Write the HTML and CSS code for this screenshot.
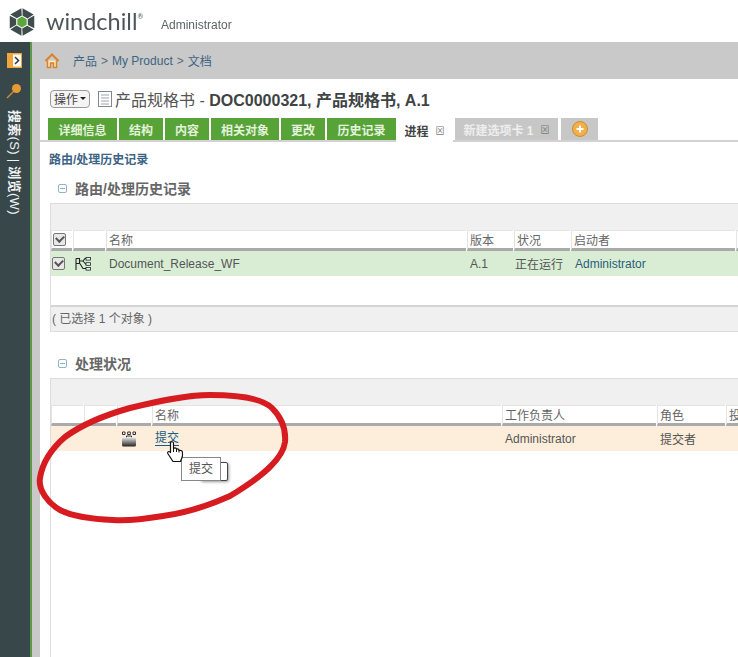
FILE: index.html
```html
<!DOCTYPE html>
<html lang="zh">
<head>
<meta charset="utf-8">
<title>Windchill</title>
<link rel="stylesheet" href="styles.css">
</head>
<body>
<div class="page">
  <header class="topbar">
    <svg class="logo" viewBox="-15 -15 30 30" width="28" height="30">
      <g fill="#3f4c4e">
        <path d="M0.600 -14.800 L12.400 -8 L6 -3.700 L0.600 -6.800 Z"/>
        <path transform="rotate(60)" d="M0.600 -14.800 L12.400 -8 L6 -3.700 L0.600 -6.800 Z"/>
        <path transform="rotate(120)" d="M0.600 -14.800 L12.400 -8 L6 -3.700 L0.600 -6.800 Z"/>
        <path transform="rotate(180)" d="M0.600 -14.800 L12.400 -8 L6 -3.700 L0.600 -6.800 Z"/>
        <path transform="rotate(240)" d="M0.600 -14.800 L12.400 -8 L6 -3.700 L0.600 -6.800 Z"/>
        <path transform="rotate(300)" d="M0.600 -14.800 L12.400 -8 L6 -3.700 L0.600 -6.800 Z"/>
      </g>
      <path d="M0 -5.800 L5 -2.900 L5 2.900 L0 5.800 L-5 2.900 L-5 -2.900 Z" fill="#5aa83c"/>
    </svg>
    <span class="brand">windchill<sup class="reg">®</sup></span>
    <span class="user">Administrator</span>
  </header>
  <div class="body-row">
    <aside class="sidebar">
      <svg class="side-open" viewBox="0 0 15 15" width="15" height="15">
        <rect width="15" height="15" fill="#f0a63c"/>
        <rect x="6" y="1.500" width="8" height="12" fill="#fff"/>
        <path d="M8 4 L11.500 7.500 L8 11" fill="none" stroke="#33393a" stroke-width="1.500"/>
      </svg>
      <svg class="side-pin" viewBox="0 0 16 16" width="16" height="16">
        <path d="M1 15 L8 8" stroke="#c98b3a" stroke-width="1.500"/>
        <circle cx="10.500" cy="5.500" r="4.500" fill="#e79a33"/>
      </svg>
      <div class="side-text"><b>搜索</b>(S) | <b>浏览</b>(W)</div>
    </aside>
    <main class="content">
      <nav class="crumbs">
        <svg class="home" viewBox="0 0 16 16" width="16" height="16">
          <path d="M1.500 8 L8 1.500 L14.500 8" fill="none" stroke="#d9822b" stroke-width="2"/>
          <path d="M3.500 7.500 V14.500 H6.500 V10 H9.500 V14.500 H12.500 V7.500" fill="#fde9b8" stroke="#d9822b" stroke-width="1.500"/>
        </svg>
        <a class="crumb">产品</a><span class="sep">&gt;</span><a class="crumb">My Product</a><span class="sep">&gt;</span><a class="crumb">文档</a>
      </nav>
      <section class="panel">
        <div class="title-row">
          <span class="action-btn">操作<i class="caret"></i></span>
          <svg class="doc" viewBox="0 0 14 16" width="14" height="16">
            <rect x="0.500" y="0.500" width="13" height="15" fill="#fff" stroke="#7d8a96"/>
            <path d="M3 4 H11 M3 7 H11 M3 10 H11 M3 13 H11" stroke="#9aa5ae"/>
          </svg>
          <h1 class="title">产品规格书 - <b>DOC0000321, 产品规格书, A.1</b></h1>
        </div>
        <div class="tabs">
          <span class="tab w69">详细信息</span>
          <span class="tab w44">结构</span>
          <span class="tab w44">内容</span>
          <span class="tab w68">相关对象</span>
          <span class="tab w44">更改</span>
          <span class="tab w69">历史记录</span>
          <span class="tab-active">进程<i class="x">⊠</i></span>
          <span class="tab-gray w103">新建选项卡 1<i class="x">⊠</i></span>
          <span class="tab-gray w37">
            <svg viewBox="0 0 16 16" width="16" height="16"><circle cx="8" cy="8" r="7.500" fill="#f2b04c" stroke="#d08a2c"/><path d="M4.500 8 H11.500 M8 4.500 V11.500" stroke="#fff" stroke-width="2"/></svg>
          </span>
        </div>
        <div class="sub-link">路由/处理历史记录</div>

        <h2 class="heading first"><i class="minus"></i>路由/处理历史记录</h2>
        <div class="table">
          <div class="toolbar"></div>
          <div class="row head cols-a">
            <span class="hc center"><i class="check"></i></span>
            <span class="hc"></span>
            <span class="hc">名称</span>
            <span class="hc">版本</span>
            <span class="hc">状况</span>
            <span class="hc">启动者</span>
            <span class="hc"></span>
          </div>
          <div class="row body green cols-a">
            <span class="center"><i class="check"></i></span>
            <span class="icon-cell">
              <svg viewBox="0 0 16 14" width="16" height="14">
                <path d="M1 1.500 V13 M1 1.500 H4.500 V6.500 H1 M4.500 4 H8 L10 1.500 H11 M8 4 L11 7.500 M4.500 6 L8 11.500 H11" fill="none" stroke="#222" stroke-width="1.100"/>
                <rect x="11" y="0.500" width="4.500" height="2.600" fill="#dfe" stroke="#222" stroke-width="0.800"/>
                <rect x="11" y="5.700" width="4.500" height="2.600" fill="#dfe" stroke="#222" stroke-width="0.800"/>
                <rect x="11" y="10.500" width="4.500" height="2.600" fill="#dfe" stroke="#222" stroke-width="0.800"/>
              </svg>
            </span>
            <span class="pad3">Document_Release_WF</span>
            <span class="pad3">A.1</span>
            <span class="pad1">正在运行</span>
            <a class="link pad4">Administrator</a>
            <span></span>
          </div>
          <div class="empty"></div>
          <div class="footer">( 已选择 1 个对象 )</div>
        </div>

        <h2 class="heading second"><i class="minus"></i>处理状况</h2>
        <div class="table last">
          <div class="toolbar"></div>
          <div class="row head cols-b">
            <span class="hc"></span>
            <span class="hc"></span>
            <span class="hc"></span>
            <span class="hc">名称</span>
            <span class="hc">工作负责人</span>
            <span class="hc">角色</span>
            <span class="hc">投</span>
          </div>
          <div class="row body peach cols-b">
            <span></span>
            <span></span>
            <span class="icon-cell task">
              <svg viewBox="0 0 16 16" width="16" height="16">
                <defs><linearGradient id="case" x1="0" y1="0" x2="0" y2="1"><stop offset="0" stop-color="#e4e4e4"/><stop offset="1" stop-color="#222"/></linearGradient></defs>
                <path d="M1.500 1 H4 V3.500 H1.500 Z M6.700 1 H9.300 V3.500 H6.700 Z M12 1 H14.500 V3.500 H12 Z" fill="#fff" stroke="#333"/>
                <path d="M5.500 6.500 V5 H10.500 V6.500" fill="none" stroke="#333"/>
                <rect x="1" y="6.500" width="14" height="9" rx="1.500" fill="url(#case)"/>
              </svg>
            </span>
            <span class="pad3"><a class="under">提交</a></span>
            <span class="pad3">Administrator</span>
            <span class="pad3">提交者</span>
            <span></span>
          </div>
        </div>
      </section>
    </main>
  </div>

  <div class="tip-back"></div>
  <div class="tip">提交</div>
  <svg class="hand" viewBox="0 0 16 21" width="16" height="21">
    <path d="M3.500 2 C3.500 0.300 6.500 0.300 6.500 2 V7.500 C7.500 6.500 9 6.500 9.500 8 C10.500 7.500 12 8 12 9.500 C13 9 15.500 9.500 15.500 11.500 V15 L13.500 20.500 H6 L0.800 12.500 C0 11 2 9.500 3.500 11.500 Z" fill="#fff" stroke="#111" stroke-width="1.200" stroke-linejoin="round"/>
    <path d="M6.500 7.500 V11 M9.500 8 V11 M12 9.500 V11.500" stroke="#111"/>
  </svg>
  <svg class="scribble" viewBox="0 0 738 657" width="738" height="657">
    <path d="M130 408 C155 402 185 395 210 395 C235 395 262 398 272 408 C282 418 286 430 285 442 C283 458 265 475 230 496 C210 505 185 513 163 516 C145 519 128 521 113 520 C90 519 72 516 60 510 C48 503 38 490 40 478 C42 465 50 450 65 437 C80 426 105 415 130 408 Z" fill="none" stroke="#d61c20" stroke-width="6" stroke-linejoin="round"/>
  </svg>
</div>
</body>
</html>
```
FILE: styles.css
```css
* { box-sizing: border-box; }
html, body { margin: 0; height: 100%; }
body {
  overflow: hidden;
  background: #fff;
  color: #555;
  font: 12px "Liberation Sans", "Noto Sans CJK SC", sans-serif;
}
i { font-style: normal; }
.page {
  position: relative;
  width: 738px;
  height: 657px;
  overflow: hidden;
  display: flex;
  flex-direction: column;
  filter: blur(0.4px);
}
.topbar {
  height: 42px;
  flex: none;
  display: flex;
  align-items: center;
  padding-left: 8px;
  padding-top: 1px;
}
.logo { margin-right: 10px; }
.brand {
  font: 400 23.500px Lato, sans-serif;
  color: #4c5557;
  position: relative;
  top: -1px;
  width: 93px;
}
.reg { font-size: 7px; vertical-align: 11px; line-height: 0; }
.user { margin-left: 22px; font-size: 12px; color: #5c6466; position: relative; top: 3px; }
.body-row { flex: 1; display: flex; min-height: 0; }
.sidebar {
  width: 32px;
  flex: none;
  background: #37474a;
  border-right: 2px solid #5c9a4a;
  display: flex;
  flex-direction: column;
  align-items: center;
  padding-top: 11px;
}
.side-open { margin-right: 1px; }
.side-pin { margin-top: 15px; margin-right: 3px; }
.side-text {
  margin-top: 11px;
  writing-mode: vertical-rl;
  text-orientation: sideways;
  color: #f2f4f4;
  font-size: 13px;
  letter-spacing: 0.300px;
  white-space: nowrap;
}
.content {
  flex: 1;
  min-width: 0;
  background: #c8c9c8;
  display: flex;
  flex-direction: column;
}
.crumbs {
  height: 37px;
  flex: none;
  display: flex;
  align-items: center;
  padding-left: 12px;
}
.home { margin-right: 13px; }
.crumb { color: #3d6485; }
.sep { color: #5d6d78; margin: 0 4px; }
.panel {
  flex: 1;
  margin-left: 8px;
  background: #fff;
  min-height: 0;
  padding-top: 8px;
}
.title-row {
  display: flex;
  align-items: center;
  height: 23px;
  padding-left: 10px;
}
.action-btn {
  display: flex;
  align-items: center;
  height: 18px;
  width: 40px;
  padding-left: 3px;
  border: 1px solid #999;
  border-radius: 4px;
  background: #f4f4f4;
  color: #444;
  margin-right: 8px;
}
.caret {
  margin-left: 2px;
  border: 3px solid transparent;
  border-top: 3px solid #222;
  border-bottom: 0;
}
.doc { margin-right: 3px; }
.title {
  margin: 0;
  font-size: 16px;
  font-weight: normal;
  color: #555;
  white-space: nowrap;
}
.title b { color: #3e4344; }
.tabs {
  margin-top: 8px;
  height: 24px;
  padding-left: 8px;
  display: flex;
  gap: 2px;
  border-bottom: 2px solid #d2d2d2;
}
.tab, .tab-gray, .tab-active {
  display: flex;
  align-items: center;
  justify-content: center;
  height: 22px;
  font-weight: bold;
  white-space: nowrap;
}
.tab { background: #57a338; color: #e4f1dc; }
.tab-active { width: 57px; margin-left: -2px; height: 24px; background: #fff; color: #444; }
.tab-gray { background: #c6c7c6; color: #eeeeee; }
.w69 { width: 69px; }
.w68 { width: 68px; }
.w44 { width: 44px; }
.w103 { width: 103px; }
.w37 { width: 37px; margin-left: 1px; }
.x { font-size: 9px; font-weight: normal; color: #777; margin-left: 7px; }
.sub-link {
  margin: 11px 0 0 9px;
  font-weight: bold;
  color: #3d6485;
  line-height: 14px;
}
.heading {
  margin: 0;
  display: flex;
  align-items: center;
  font-size: 14px;
  font-weight: bold;
  color: #666;
  height: 18px;
  padding-left: 18px;
}
.heading.first { margin-top: 12px; }
.heading.second { margin-top: 22px; }
.minus {
  width: 9px;
  height: 9px;
  border: 1px solid #8fb3c8;
  border-radius: 2px;
  margin-right: 8px;
  background: linear-gradient(#8fb3c8, #8fb3c8) center / 5px 1px no-repeat;
}
.table {
  margin: 6px 0 0 10px;
  width: 700px;
  border-left: 1px solid #ddd;
}
.table.last { height: 300px; }
.toolbar {
  height: 27px;
  background: #f0f0f0;
  border-top: 1px solid #dcdcdc;
}
.row { display: grid; align-items: center; }
.cols-a { grid-template-columns: 22px 33px 361px 47px 57px 165px 1fr; }
.cols-b { grid-template-columns: 33px 33px 35px 350px 155px 69px 1fr; }
.head { height: 21px; background: #fff; }
.hc {
  height: 21px;
  padding-left: 2px;
  border-left: 1px solid #e4e4e4;
  border-top: 1px solid #e4e4e4;
  border-bottom: 3px solid #aaa;
  margin-right: 1px;
  line-height: 20px;
  color: #666;
  display: block;
}
.center { display: flex; align-items: center; padding: 0 0 0 1px; }
.body { height: 25px; color: #555; white-space: nowrap; }
.green { background: #d9edd5; }
.peach { background: #fdeedc; }
.icon-cell { display: flex; align-items: center; padding-left: 2px; }
.task { padding-left: 4px; }
.pad3 { padding-left: 3px; }
.pad1 { padding-left: 1px; }
.pad4 { padding-left: 4px; }
.link { color: #2b5d78; }
.under {
  display: inline-block;
  line-height: 13px;
  color: #1a5a88;
  border-bottom: 1px solid #1a5a88;
}
.check {
  display: block;
  width: 13px;
  height: 13px;
  border: 1px solid #777;
  border-radius: 2px;
  background: #e8e8e8;
  position: relative;
}
.check::after {
  content: "";
  position: absolute;
  left: 2px;
  top: 1px;
  width: 6px;
  height: 4px;
  border-left: 2px solid #555;
  border-bottom: 2px solid #555;
  transform: rotate(-45deg);
}
.empty { height: 29px; }
.footer {
  height: 27px;
  background: #f0f0f0;
  border-top: 2px solid #d4d4d4;
  border-bottom: 1px solid #dcdcdc;
  line-height: 25px;
  padding-left: 1px;
  color: #666;
}
.tip, .tip-back { position: absolute; background: #fff; }
.tip {
  left: 181px;
  top: 457px;
  width: 40px;
  height: 24px;
  border: 1px solid #888;
  line-height: 22px;
  text-align: center;
  color: #555;
}
.tip-back {
  left: 200px;
  top: 462px;
  width: 28px;
  height: 19px;
  border: 1px solid #444;
  border-radius: 2px;
  box-shadow: 1px 1px 3px #999;
}
.hand { position: absolute; left: 167px; top: 441px; }
.scribble { position: absolute; left: 0; top: 0; pointer-events: none; }
```
